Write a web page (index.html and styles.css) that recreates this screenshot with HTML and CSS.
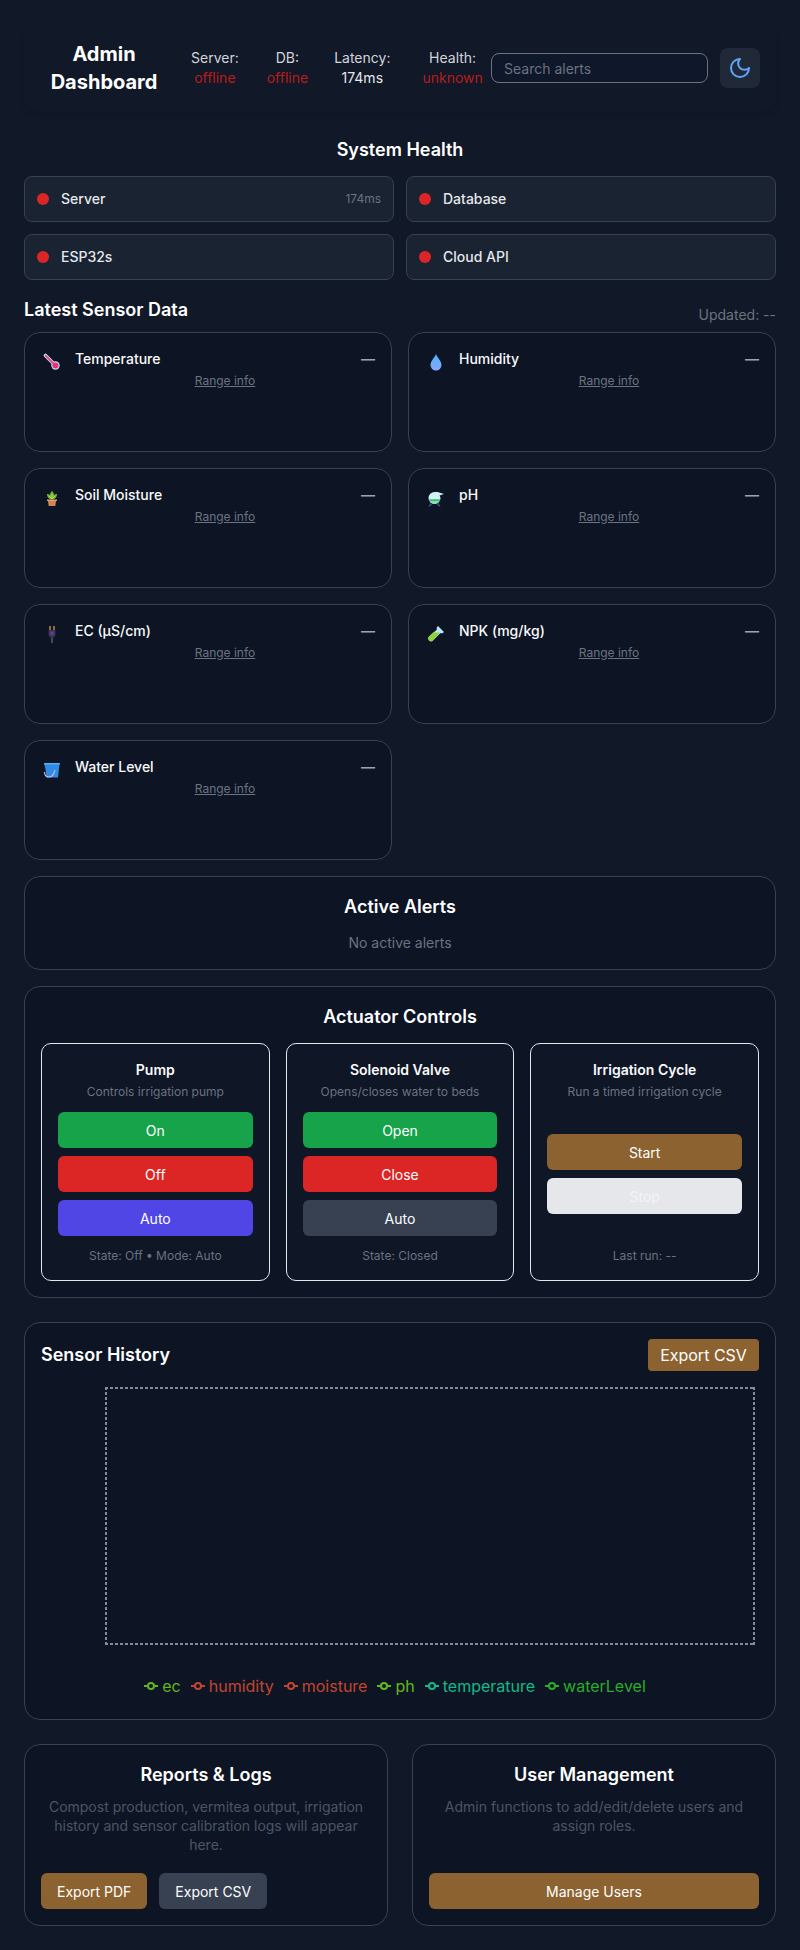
FILE: index.html
```html
<!DOCTYPE html>
<html lang="en">
<head>
<meta charset="utf-8">
<title>Admin Dashboard</title>
<link rel="stylesheet" href="styles.css">
</head>
<body>
<main class="page">
  <header class="topbar">
    <h1 class="brand">Admin Dashboard</h1>
    <div class="stats">
      <div class="stat"><span>Server:</span><b class="bad">offline</b></div>
      <div class="stat stat-db"><span>DB:</span><b class="bad">offline</b></div>
      <div class="stat stat-lat"><span>Latency:</span><b>174ms</b></div>
      <div class="stat stat-health"><span>Health:</span><b class="bad">unknown</b></div>
    </div>
    <input class="search" type="text" placeholder="Search alerts">
    <button class="theme" aria-label="Theme">
      <svg width="24" height="24" viewBox="0 0 24 24" fill="none" stroke="#60a5fa" stroke-width="2" stroke-linecap="round" stroke-linejoin="round"><path d="M12 3a6 6 0 0 0 9 9 9 9 0 1 1-9-9Z"/></svg>
    </button>
  </header>

  <section class="health">
    <h2 class="heading center">System Health</h2>
    <div class="health-grid">
      <div class="hcard"><i class="dot"></i><span class="hname">Server</span><span class="hms">174ms</span></div>
      <div class="hcard"><i class="dot"></i><span class="hname">Database</span></div>
      <div class="hcard"><i class="dot"></i><span class="hname">ESP32s</span></div>
      <div class="hcard"><i class="dot"></i><span class="hname">Cloud API</span></div>
    </div>
  </section>

  <section class="sensors">
    <div class="sensors-head">
      <h2 class="heading">Latest Sensor Data</h2>
      <span class="updated">Updated: --</span>
    </div>
    <div class="sensor-grid">
      <article class="scard">
        <span class="sicon"><svg width="18" height="18" viewBox="0 0 18 18"><path d="M2.500 2.500 11 11" stroke="#b5e2f7" stroke-width="3.600" stroke-linecap="round"/><circle cx="12.500" cy="12.500" r="4.200" fill="#b5e2f7"/><path d="M2.800 2.800 11 11" stroke="#ef4483" stroke-width="1.900" stroke-linecap="round"/><circle cx="12.500" cy="12.500" r="3" fill="#f02f72"/></svg></span>
        <div class="sbody"><div class="srow"><span class="sname">Temperature</span><span class="sval">—</span></div><a class="range">Range info</a></div>
      </article>
      <article class="scard">
        <span class="sicon"><svg width="18" height="18" viewBox="0 0 18 18"><defs><linearGradient id="drop" x1="0" y1="0" x2="0" y2="1"><stop offset="0" stop-color="#4db4f5"/><stop offset="1" stop-color="#85a8ff"/></linearGradient></defs><path d="M9 1C8 4 3.500 8 3.500 12a5.500 5.500 0 0 0 11 0C14.500 8 10 4 9 1Z" fill="url(#drop)"/></svg></span>
        <div class="sbody"><div class="srow"><span class="sname">Humidity</span><span class="sval">—</span></div><a class="range">Range info</a></div>
      </article>
      <article class="scard">
        <span class="sicon"><svg width="18" height="18" viewBox="0 0 18 18"><path d="M9 10.500C6 10.500 4 8 4 5c1 0 2 0 3 1C7 4 8 3 9 2c1 1 2 2 2 4 1-1 2-1 3-1 0 3-2 5.500-5 5.500Z" fill="#74b335"/><path d="M9 10V5M6 7l3 3 3-3" stroke="#b2de55" fill="none"/><path d="M4 10.500h10V12H4z" fill="#e59a68"/><path d="M5 12h8l-.7 5H5.700z" fill="#d18555"/></svg></span>
        <div class="sbody"><div class="srow"><span class="sname">Soil Moisture</span><span class="sval">—</span></div><a class="range">Range info</a></div>
      </article>
      <article class="scard">
        <span class="sicon"><svg width="18" height="18" viewBox="0 0 18 18"><path d="M2 17.500l2.500-4.500M13 17.500l-2.500-4.500M2 17l3-1.500M13 17l-3-1.500" stroke="#5a4a8a" fill="none"/><path d="M1.500 9A6 6 0 0 1 7.500 3h3l6.500 2-4.500 1.500A6 6 0 0 1 13.500 9a6 6 0 0 1-12 0Z" fill="#cff3f7"/><path d="M1.700 10.200h11.600A6 6 0 0 1 12 12.500H3a6 6 0 0 1-1.300-2.300Z" fill="#35c26a"/><path d="M3 12.500h9A6 6 0 0 1 7.500 15 6 6 0 0 1 3 12.500Z" fill="#8fdcc0"/></svg></span>
        <div class="sbody"><div class="srow"><span class="sname">pH</span><span class="sval">—</span></div><a class="range">Range info</a></div>
      </article>
      <article class="scard">
        <span class="sicon"><svg width="18" height="18" viewBox="0 0 18 18"><path d="M7 1v4M11 1v4" stroke="#b98a4a" stroke-width="1.500"/><path d="M5.500 5h7v5l-1.500 2.500H7L5.500 10Z" fill="#39364c"/><rect x="7.500" y="6.500" width="3" height="3.500" fill="#5c3fb0"/><path d="M8 12.500h2V18H8z" fill="#4a4a55"/></svg></span>
        <div class="sbody"><div class="srow"><span class="sname">EC (µS/cm)</span><span class="sval">—</span></div><a class="range">Range info</a></div>
      </article>
      <article class="scard">
        <span class="sicon"><svg width="18" height="18" viewBox="0 0 18 18"><path d="M11 1l6 6-2 1.500-1.500-.5L5.500 16a3 3 0 0 1-4-4L10 4.500 9.500 3Z" fill="#b8e6fa"/><path d="M6 7.500h7L5.500 16a3 3 0 0 1-4-4Z" fill="#8ed33a"/></svg></span>
        <div class="sbody"><div class="srow"><span class="sname">NPK (mg/kg)</span><span class="sval">—</span></div><a class="range">Range info</a></div>
      </article>
      <article class="scard">
        <span class="sicon"><svg width="18" height="18" viewBox="0 0 18 18"><path d="M1 2h16l-.6 2L15 16.500H3.500L2.500 8Z" fill="#2f8be6"/><path d="M1 2h16v1.500H1z" fill="#4fb0f5"/><path d="M1.500 11c0 3 1.500 5 4.500 5 3 0 5-3 6-7" fill="none" stroke="#c9b6ea" stroke-width="1.200"/></svg></span>
        <div class="sbody"><div class="srow"><span class="sname">Water Level</span><span class="sval">—</span></div><a class="range">Range info</a></div>
      </article>
    </div>
  </section>

  <section class="panel alerts">
    <h2 class="heading center">Active Alerts</h2>
    <p class="empty">No active alerts</p>
  </section>

  <section class="panel actuators">
    <h2 class="heading center">Actuator Controls</h2>
    <div class="act-grid">
      <div class="act">
        <h3>Pump</h3><p class="act-sub">Controls irrigation pump</p>
        <div class="act-btns"><button class="btn green">On</button><button class="btn red">Off</button><button class="btn indigo">Auto</button></div>
        <p class="act-state">State: Off • Mode: Auto</p>
      </div>
      <div class="act">
        <h3>Solenoid Valve</h3><p class="act-sub">Opens/closes water to beds</p>
        <div class="act-btns"><button class="btn green">Open</button><button class="btn red">Close</button><button class="btn slate">Auto</button></div>
        <p class="act-state">State: Closed</p>
      </div>
      <div class="act">
        <h3>Irrigation Cycle</h3><p class="act-sub">Run a timed irrigation cycle</p>
        <div class="act-btns"><button class="btn brown">Start</button><button class="btn pale">Stop</button></div>
        <p class="act-state">Last run: --</p>
      </div>
    </div>
  </section>

  <section class="panel history">
    <div class="history-head">
      <h2 class="heading">Sensor History</h2>
      <button class="btn brown export">Export CSV</button>
    </div>
    <div class="chart"></div>
    <ul class="legend">
      <li class="c-ec"><svg width="14" height="14" viewBox="0 0 14 14"><path d="M0 7h14" stroke="currentColor" stroke-width="2"/><circle cx="7" cy="7" r="3" fill="#0d1525" stroke="currentColor" stroke-width="2"/></svg>ec</li>
      <li class="c-hum"><svg width="14" height="14" viewBox="0 0 14 14"><path d="M0 7h14" stroke="currentColor" stroke-width="2"/><circle cx="7" cy="7" r="3" fill="#0d1525" stroke="currentColor" stroke-width="2"/></svg>humidity</li>
      <li class="c-moist"><svg width="14" height="14" viewBox="0 0 14 14"><path d="M0 7h14" stroke="currentColor" stroke-width="2"/><circle cx="7" cy="7" r="3" fill="#0d1525" stroke="currentColor" stroke-width="2"/></svg>moisture</li>
      <li class="c-ph"><svg width="14" height="14" viewBox="0 0 14 14"><path d="M0 7h14" stroke="currentColor" stroke-width="2"/><circle cx="7" cy="7" r="3" fill="#0d1525" stroke="currentColor" stroke-width="2"/></svg>ph</li>
      <li class="c-temp"><svg width="14" height="14" viewBox="0 0 14 14"><path d="M0 7h14" stroke="currentColor" stroke-width="2"/><circle cx="7" cy="7" r="3" fill="#0d1525" stroke="currentColor" stroke-width="2"/></svg>temperature</li>
      <li class="c-water"><svg width="14" height="14" viewBox="0 0 14 14"><path d="M0 7h14" stroke="currentColor" stroke-width="2"/><circle cx="7" cy="7" r="3" fill="#0d1525" stroke="currentColor" stroke-width="2"/></svg>waterLevel</li>
    </ul>
  </section>

  <section class="bottom">
    <div class="panel tool">
      <h2 class="heading center">Reports &amp; Logs</h2>
      <p class="tool-text">Compost production, vermitea output, irrigation history and sensor calibration logs will appear here.</p>
      <div class="tool-btns"><button class="btn brown wide">Export PDF</button><button class="btn slate wide">Export CSV</button></div>
    </div>
    <div class="panel tool">
      <h2 class="heading center">User Management</h2>
      <p class="tool-text">Admin functions to add/edit/delete users and assign roles.</p>
      <div class="tool-btns"><button class="btn brown full">Manage Users</button></div>
    </div>
  </section>
</main>
</body>
</html>
```
FILE: styles.css
```css
* { box-sizing: border-box; }
html, body { margin: 0; padding: 0; }
body {
  background: #111827;
  color: #f3f4f6;
  font-family: Inter, "Liberation Sans", sans-serif;
  font-size: 14px;
  line-height: 20px;
}
h1, h2, h3, p, ul { margin: 0; padding: 0; }
button { font-family: inherit; border: 0; cursor: pointer; }

.page { padding: 24px; display: flex; flex-direction: column; }

/* header */
.topbar {
  height: 88px;
  display: flex;
  align-items: center;
  padding: 0 16px;
  border-radius: 16px;
  box-shadow: 0 4px 6px -1px rgba(0, 0, 0, .12);
}
.brand {
  width: 128px;
  flex: none;
  font-size: 20px;
  line-height: 28px;
  font-weight: 700;
  text-align: center;
  color: #fff;
}
.stats { display: flex; margin-left: 23px; width: 300px; flex: none; }
.stat { display: flex; flex-direction: column; align-items: center; font-size: 14px; line-height: 20px; color: #d1d5db; }
.stat-db { margin-left: 28px; }
.stat-lat { margin-left: 26px; }
.stat-health { margin-left: 32px; }
.stat b { font-weight: 400; color: #e5e7eb; }
.stat b.bad { color: #b91c1c; }
.search {
  width: 217px;
  height: 30px;
  flex: none;
  padding: 0 12px;
  font: 14px Inter, sans-serif;
  color: #e5e7eb;
  background: #0f172a;
  border: 1px solid #6b7280;
  border-radius: 8px;
  outline: 0;
}
.search::placeholder { color: #6b7280; opacity: 1; }
.theme {
  width: 40px;
  height: 40px;
  flex: none;
  margin-left: 12px;
  display: flex;
  align-items: center;
  justify-content: center;
  background: #1f2937;
  border-radius: 8px;
  padding: 0;
}

.heading { font-size: 18px; line-height: 28px; font-weight: 600; color: #fff; }
.center { text-align: center; }

/* health */
.health { margin-top: 24px; }
.health-grid { display: grid; grid-template-columns: 1fr 1fr; gap: 12px; margin-top: 12px; }
.hcard {
  height: 46px;
  display: flex;
  align-items: center;
  gap: 12px;
  padding: 0 12px;
  background: #1a2332;
  border: 1px solid #374151;
  border-radius: 8px;
}
.dot { width: 12px; height: 12px; border-radius: 50%; background: #dc2626; flex: none; }
.hname { font-weight: 500; color: #e5e7eb; }
.hms { margin-left: auto; font-size: 12px; color: #6b7280; }

/* sensors */
.sensors { margin-top: 16px; }
.sensors-head { display: flex; justify-content: space-between; align-items: flex-end; height: 28px; }
.updated { color: #6b7280; line-height: 20px; margin-bottom: -1px; }
.sensor-grid { display: grid; grid-template-columns: 368px 368px; justify-content: space-between; gap: 16px; margin-top: 8px; }
.scard {
  height: 120px;
  display: flex;
  gap: 12px;
  padding: 16px;
  background: #0d1525;
  border: 1px solid #374151;
  border-radius: 16px;
}
.sicon { width: 22px; height: 26px; flex: none; display: flex; align-items: center; justify-content: center; }
.sbody { flex: 1; display: flex; flex-direction: column; align-items: center; }
.srow { width: 100%; display: flex; justify-content: space-between; }
.sname { font-weight: 500; color: #f9fafb; }
.sval { color: #9ca3af; font-weight: 600; line-height: 19px; }
.range { font-size: 12px; line-height: 16px; margin-top: 4px; color: #6b7280; text-decoration: underline; }

/* panels */
.panel { background: #0d1525; border: 1px solid #374151; border-radius: 16px; padding: 16px; }
.alerts { margin-top: 16px; height: 94px; text-align: center; }
.empty { color: #6b7280; margin-top: 12px; }
.actuators { margin-top: 16px; height: 312px; }
.act-grid { display: grid; grid-template-columns: repeat(3, 1fr); gap: 16px; margin-top: 12px; }
.act {
  height: 238px;
  display: flex;
  flex-direction: column;
  padding: 16px;
  background: #0f1626;
  border: 1px solid #e5e7eb;
  border-radius: 10px;
  text-align: center;
}
.act h3 { font-size: 14px; line-height: 20px; font-weight: 600; color: #f9fafb; }
.act-sub { font-size: 12px; line-height: 16px; margin-top: 4px; color: #6b7280; }
.act-btns { flex: 1; display: flex; flex-direction: column; justify-content: center; gap: 8px; }
.act-state { font-size: 12px; line-height: 16px; color: #6b7280; }
.btn { height: 36px; border-radius: 6px; font-size: 14px; color: #fff; }
.green { background: #16a34a; }
.red { background: #dc2626; }
.indigo { background: #4f46e5; }
.slate { background: #374151; }
.brown { background: #8b6230; }
.pale { background: #e5e7eb; color: #f3f4f6; }

/* history */
.history { margin-top: 24px; height: 398px; }
.history-head { display: flex; justify-content: space-between; align-items: center; height: 32px; }
.export { height: 32px; width: 111px; border-radius: 4px; font-size: 16px; }
.chart {
  margin: 16px 4px 0 64px;
  height: 258px;
  background-image:
    repeating-linear-gradient(90deg, #858b95 0 3px, transparent 3px 5px),
    repeating-linear-gradient(90deg, #858b95 0 3px, transparent 3px 5px),
    repeating-linear-gradient(0deg, #858b95 0 3px, transparent 3px 5px),
    repeating-linear-gradient(0deg, #858b95 0 3px, transparent 3px 5px);
  background-size: 100% 2px, 100% 2px, 2px 100%, 2px 100%;
  background-position: 0 0, 0 100%, 0 0, 100% 0;
  background-repeat: no-repeat;
}
.legend { list-style: none; display: flex; justify-content: center; gap: 10px; margin-top: 29px; padding-right: 10px; font-size: 16px; line-height: 24px; }
.legend li { display: flex; align-items: center; gap: 4px; }
.c-ec { color: #62b41e; }
.c-hum { color: #c2452d; }
.c-moist { color: #c2452d; }
.c-ph { color: #62b91a; }
.c-temp { color: #14b886; }
.c-water { color: #28ad28; }

/* bottom */
.bottom { display: grid; grid-template-columns: 1fr 1fr; gap: 24px; margin-top: 24px; }
.tool { height: 182px; display: flex; flex-direction: column; }
.tool-text { margin-top: 8px; text-align: center; color: #4b5563; line-height: 19px; }
.tool-btns { margin-top: auto; display: flex; gap: 12px; }
.wide { padding: 0 16px; }
.full { width: 100%; }
```
